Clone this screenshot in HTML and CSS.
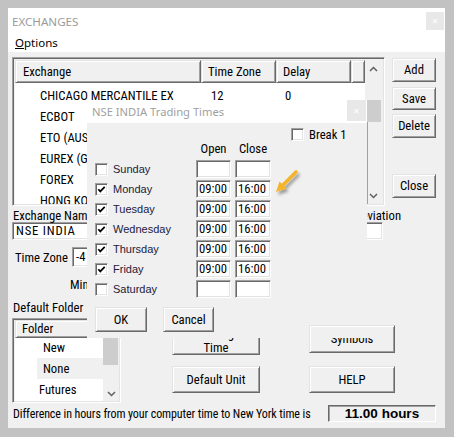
FILE: index.html
```html
<!DOCTYPE html>
<html>
<head>
<meta charset="utf-8">
<link rel="stylesheet" href="styles.css">
</head>
<body>
<div class="win">
  <div class="titlebar"><span>EXCHANGES</span><span class="xbtn">×</span></div>
  <div class="menubar"><span><u>O</u>ptions</span></div>
  <div class="content">
    <div class="top">
      <div class="list">
        <div class="list-main">
          <div class="hdr">
            <div class="hc c1">Exchange</div>
            <div class="hc c2">Time Zone</div>
            <div class="hc c3">Delay</div>
            <div class="hc c4"></div>
          </div>
          <div class="rows">
            <div class="row"><span class="r1">CHICAGO MERCANTILE EX</span><span class="r2">12</span><span class="r3">0</span></div>
            <div class="row"><span class="r1">ECBOT</span><span class="r2">12</span><span class="r3">0</span></div>
            <div class="row"><span class="r1">ETO (AUSTRALIA)</span><span class="r2">-2</span><span class="r3">0</span></div>
            <div class="row"><span class="r1">EUREX (GERMANY)</span><span class="r2">6</span><span class="r3">0</span></div>
            <div class="row"><span class="r1">FOREX</span><span class="r2">0</span><span class="r3">0</span></div>
            <div class="row"><span class="r1">HONG KONG</span><span class="r2">-12</span><span class="r3">0</span></div>
          </div>
        </div>
        <div class="sb">
          <div class="sb-arrow"><svg width="9" height="6" viewBox="0 0 9 6"><path d="M1 5 L4.5 1.5 L8 5" fill="none" stroke="#606060" stroke-width="1.5"/></svg></div>
          <div class="sb-thumb"></div>
          <div class="sb-rest"><div class="sb-arrow"><svg width="9" height="6" viewBox="0 0 9 6"><path d="M1 1 L4.5 4.5 L8 1" fill="none" stroke="#606060" stroke-width="1.5"/></svg></div></div>
        </div>
      </div>
      <div class="btncol">
        <div class="btn b-add">Add</div>
        <div class="btn b-save">Save</div>
        <div class="btn b-del">Delete</div>
        <div class="btn b-close">Close</div>
      </div>
    </div>

    <div class="namerow">
      <div class="fcol-l">
        <div class="lbl">Exchange Name</div>
        <div class="inp name-inp">NSE INDIA</div>
      </div>
      <div class="fcol-r">
        <div class="lbl abbr">Abbreviation</div>
        <div class="inp abbr-inp"></div>
      </div>
    </div>
    <div class="tzrow">
      <div class="tz-lbl">Time Zone</div>
      <div class="inp tz-inp">-4</div>
    </div>
    <div class="minrow">Minutes Delay</div>
    <div class="dflbl">Default Folder</div>

    <div class="lower">
      <div class="flist">
        <div class="fhdr">Folder</div>
        <div class="fbody">
          <div class="frows">
            <div class="frow f-new">New</div>
            <div class="frow f-none"><span>None</span></div>
            <div class="frow f-fut">Futures</div>
          </div>
          <div class="fsb">
            <div class="fsb-thumb"></div>
            <div class="fsb-down"><svg width="9" height="6" viewBox="0 0 9 6"><path d="M1 1 L4.5 4.5 L8 1" fill="none" stroke="#606060" stroke-width="1.5"/></svg></div>
          </div>
        </div>
      </div>
      <div class="col2">
        <div class="btn b-time">Exchange<br>Time</div>
        <div class="btn b-unit">Default Unit</div>
      </div>
      <div class="col3">
        <div class="btn b-sym">Symbols</div>
        <div class="btn b-help">HELP</div>
      </div>
    </div>

    <div class="bottom">
      <div class="diff">Difference in hours from your computer time to New York time is</div>
      <div class="hours">11.00 hours</div>
    </div>
  </div>

  <div class="dlg">
    <div class="dlg-title"><span>NSE INDIA Trading Times</span><span class="dlg-x">×</span></div>
    <div class="dlg-body">
      <div class="brk"><span class="cb"></span><span class="brk-t">Break 1</span></div>
      <div class="cols"><span class="ch1">Open</span><span class="ch2">Close</span></div>
      <div class="drow first"><span class="cb"></span><span class="dlbl">Sunday</span><span class="inp to"></span><span class="inp tc"></span></div>
      <div class="drow"><span class="cb on"><svg viewBox="0 0 11 11"><path d="M2.3 5.2 L4.3 7.4 L8.7 2.8" fill="none" stroke="#000" stroke-width="1.7"/></svg></span><span class="dlbl">Monday</span><span class="inp to">09:00</span><span class="inp tc">16:00</span></div>
      <div class="drow"><span class="cb on"><svg viewBox="0 0 11 11"><path d="M2.3 5.2 L4.3 7.4 L8.7 2.8" fill="none" stroke="#000" stroke-width="1.7"/></svg></span><span class="dlbl">Tuesday</span><span class="inp to">09:00</span><span class="inp tc">16:00</span></div>
      <div class="drow"><span class="cb on"><svg viewBox="0 0 11 11"><path d="M2.3 5.2 L4.3 7.4 L8.7 2.8" fill="none" stroke="#000" stroke-width="1.7"/></svg></span><span class="dlbl">Wednesday</span><span class="inp to">09:00</span><span class="inp tc">16:00</span></div>
      <div class="drow"><span class="cb on"><svg viewBox="0 0 11 11"><path d="M2.3 5.2 L4.3 7.4 L8.7 2.8" fill="none" stroke="#000" stroke-width="1.7"/></svg></span><span class="dlbl">Thursday</span><span class="inp to">09:00</span><span class="inp tc">16:00</span></div>
      <div class="drow"><span class="cb on"><svg viewBox="0 0 11 11"><path d="M2.3 5.2 L4.3 7.4 L8.7 2.8" fill="none" stroke="#000" stroke-width="1.7"/></svg></span><span class="dlbl">Friday</span><span class="inp to">09:00</span><span class="inp tc">16:00</span></div>
      <div class="drow"><span class="cb"></span><span class="dlbl">Saturday</span><span class="inp to"></span><span class="inp tc"></span></div>
      <div class="dbtns"><div class="btn b-ok">OK</div><div class="btn b-cancel">Cancel</div></div>
    </div>
  </div>
</div>
<svg class="arrow" width="34" height="34" viewBox="0 0 34 34">
  <defs><filter id="sh" x="-30%" y="-30%" width="160%" height="160%"><feDropShadow dx="2" dy="3" stdDeviation="1.4" flood-color="#000" flood-opacity="0.35"/></filter></defs>
  <g filter="url(#sh)">
    <path d="M26 7 L13 20" stroke="#f4b52c" stroke-width="3.6" stroke-linecap="round"/>
    <polygon points="6,27 9.5,16.4 16.6,23.5" fill="#f4b52c"/>
  </g>
</svg>
</body>
</html>
```
FILE: styles.css
```css
* { box-sizing: border-box; }
body {
  margin: 0;
  background: #c2c2c2;
  width: 454px;
  height: 437px;
  overflow: hidden;
  position: relative;
  font-family: "Roboto Condensed", "Liberation Sans", Arial, sans-serif;
  font-size: 12.7px;
  color: #000;
}
.win {
  position: relative;
  margin: 8px 0 0 8px;
  width: 437px;
  height: 420px;
  background: #f0f0f0;
  overflow: hidden;
}
.titlebar {
  height: 26px;
  background: #fff;
  display: flex;
  align-items: center;
  padding-left: 4px;
  font-family: "Noto Sans", "Open Sans", sans-serif;
  font-size: 11.6px;
  color: #9a9a9a;
}
.xbtn {
  margin-left: auto;
  margin-right: 1px;
  width: 18px;
  height: 18px;
  background: #e8e8e8;
  color: #fff;
  font-size: 11px;
  line-height: 17px;
  text-align: center;
}
.menubar {
  height: 18px;
  background: #fff;
  padding-left: 7px;
  font-family: "Noto Sans", "Open Sans", sans-serif;
  font-size: 11.5px;
  line-height: 18px;
}
.content { padding: 5px 9px 0 4px; }

.list, .flist, .inp, .cb {
  border: 1px solid;
  border-color: #a0a0a0 #fff #fff #a0a0a0;
  box-shadow: inset 1px 1px #696969, inset -1px -1px #e3e3e3;
}
.btn, .hc, .fhdr {
  border: 1px solid;
  border-color: #e3e3e3 #696969 #696969 #e3e3e3;
  box-shadow: inset 1px 1px #fff, inset -1px -1px #a0a0a0;
  background: #f0f0f0;
}

.top { display: flex; height: 149px; }
.list {
  width: 373px;
  height: 149px;
  display: flex;
  padding: 2px 1px 1px 2px;
  background: #f0f0f0;
  flex: none;
}
.list-main {
  width: 350px;
  background: #fff;
  overflow: hidden;
  display: flex;
  flex-direction: column;
}
.hdr { display: flex; height: 23px; flex: none; }
.hc { padding-left: 6px; line-height: 21px; white-space: nowrap; flex: none; }
.c1 { width: 186px; padding-left: 7px; }
.c2 { width: 75px; }
.c3 { width: 75px; }
.c4 { width: 14px; }
.rows { padding-top: 2px; }
.row { height: 21px; display: flex; align-items: center; white-space: nowrap; }
.r1 { width: 186px; padding-left: 25px; flex: none; }
.r2 { width: 75px; padding-left: 10px; flex: none; }
.r3 { padding-left: 9px; }
.sb { width: 17px; display: flex; flex-direction: column; background: #f0f0f0; flex: none; }
.sb-arrow { height: 17px; flex: none; display: flex; align-items: center; justify-content: center; }
.sb-thumb { margin-top: 23px; height: 22px; margin-left: 2px; width: 14px; background: #cdcdcd; flex: none; }
.sb-rest {
  flex: 1;
  margin-left: 2px;
  border-left: 1px solid #a0a0a0;
  display: flex;
  flex-direction: column;
  justify-content: flex-end;
}
.sb-rest .sb-arrow { margin-left: -3px; }

.btncol { margin-left: 7px; width: 44px; display: flex; flex-direction: column; padding-top: 1px; flex: none; }
.btn { display: flex; align-items: center; justify-content: center; text-align: center; line-height: 14px; white-space: nowrap; flex: none; }
.b-add { height: 24px; }
.b-save { margin-top: 5px; height: 23px; }
.b-del { margin-top: 4px; height: 24px; }
.b-close { margin-top: 36px; height: 24px; }

.namerow { display: flex; margin-top: 4px; }
.lbl { line-height: 12px; padding-left: 1px; white-space: nowrap; }
.inp {
  background: #fff;
  height: 18px;
  padding-left: 3px;
  line-height: 16px;
  white-space: nowrap;
  overflow: hidden;
  flex: none;
}
.name-inp { width: 150px; letter-spacing: 0.8px; }
.fcol-r { margin-left: auto; margin-right: 53px; width: 45px; }
.abbr { padding-left: 0; }
.abbr-inp { width: 45px; }
.tzrow { display: flex; align-items: center; margin-top: 7px; height: 20px; }
.tz-lbl { width: 60px; padding-left: 3px; white-space: nowrap; flex: none; }
.tz-inp { width: 40px; height: 20px; line-height: 18px; }
.minrow { margin-top: 12px; padding-left: 58px; line-height: 12px; white-space: nowrap; }
.dflbl { margin-top: 11px; line-height: 12px; padding-left: 1px; }

.lower { display: flex; margin-top: 4px; height: 85px; align-items: flex-start; }
.flist {
  width: 109px;
  height: 85px;
  padding: 1px 1px 1px 2px;
  display: flex;
  flex-direction: column;
  background: #f0f0f0;
  flex: none;
}
.fhdr { height: 18px; flex: none; padding-left: 6px; line-height: 16px; }
.fbody { display: flex; flex: 1; overflow: hidden; }
.frows { flex: 1; background: #fff; }
.frow { height: 21px; line-height: 21px; white-space: nowrap; }
.f-new { padding-left: 28px; height: 20px; line-height: 20px; }
.f-none { padding-left: 22px; }
.f-none span { display: block; background: #f0f0f0; padding-left: 6px; height: 21px; }
.f-fut { padding-left: 24px; }
.fsb { width: 16px; display: flex; flex-direction: column; background: #f0f0f0; flex: none; }
.fsb-thumb { height: 27px; width: 15px; background: #cdcdcd; flex: none; }
.fsb-down { margin-top: auto; height: 14px; display: flex; align-items: center; justify-content: center; }

.col2 { margin-left: 51px; width: 88px; display: flex; flex-direction: column; padding-top: 8px; flex: none; }
.b-time { height: 29px; }
.b-unit { margin-top: 11px; height: 27px; }
.col3 { margin-left: 49px; width: 86px; display: flex; flex-direction: column; padding-top: 7px; flex: none; }
.b-sym { height: 28px; position: relative; z-index: 3; }
.b-sym::before {
  content: "";
  position: absolute;
  left: 1px;
  right: 1px;
  top: 1px;
  height: 11px;
  background: #f0f0f0;
}
.b-help { margin-top: 13px; height: 27px; }

.bottom { display: flex; align-items: center; margin-top: 2px; height: 17px; }
.diff { padding-left: 1px; white-space: nowrap; font-size: 12px; letter-spacing: -0.1px; }
.hours {
  margin-left: auto;
  width: 108px;
  height: 17px;
  flex: none;
  border: 1px solid;
  border-color: #696969 #fff #fff #696969;
  box-shadow: inset 1px 1px #a0a0a0;
  font-family: "Liberation Sans", Arial, sans-serif;
  font-weight: bold;
  font-size: 13.5px;
  line-height: 15px;
  text-align: center;
  white-space: nowrap;
}

.dlg {
  position: absolute;
  left: 79px;
  top: 92px;
  width: 280px;
  height: 238px;
  background: #f0f0f0;
  z-index: 2;
}
.dlg-title {
  height: 23px;
  background: #fff;
  display: flex;
  align-items: center;
  padding-left: 5px;
  font-family: "Noto Sans", "Open Sans", sans-serif;
  font-size: 11.2px;
  color: #a0a0a0;
}
.dlg-x {
  margin-left: auto;
  margin-right: 1px;
  align-self: flex-start;
  width: 19px;
  height: 21px;
  background: #e8e8e8;
  color: #fff;
  font-size: 11px;
  line-height: 21px;
  text-align: center;
}
.dlg-body { padding-top: 5px; }
.brk { display: flex; align-items: center; margin-left: 204px; height: 13px; }
.cb { width: 13px; height: 13px; background: #fff; position: relative; flex: none; display: block; }
.cb svg { position: absolute; left: 0; top: 0; width: 11px; height: 11px; }
.brk-t { margin-left: 5px; white-space: nowrap; }
.cols { display: flex; margin-left: 109px; margin-top: 2px; line-height: 12px; }
.ch1 { width: 35px; text-align: center; }
.ch2 { width: 36px; margin-left: 4px; text-align: center; }
.drow { display: flex; align-items: center; height: 18px; margin-top: 2px; }
.drow.first { margin-top: 5px; }
.drow .cb { margin-left: 8px; }
.dlbl {
  width: 83px;
  margin-left: 5px;
  flex: none;
  font-family: "Liberation Sans", Arial, sans-serif;
  font-size: 11px;
  color: #20203c;
}
.to { width: 35px; padding-left: 2px; }
.tc { width: 36px; margin-left: 4px; padding-left: 2px; }
.dbtns { display: flex; margin-left: 8px; margin-top: 9px; }
.b-ok { width: 52px; height: 25px; }
.b-cancel { width: 51px; height: 25px; margin-left: 16px; }

.arrow { position: absolute; left: 270px; top: 165px; z-index: 5; }
```
